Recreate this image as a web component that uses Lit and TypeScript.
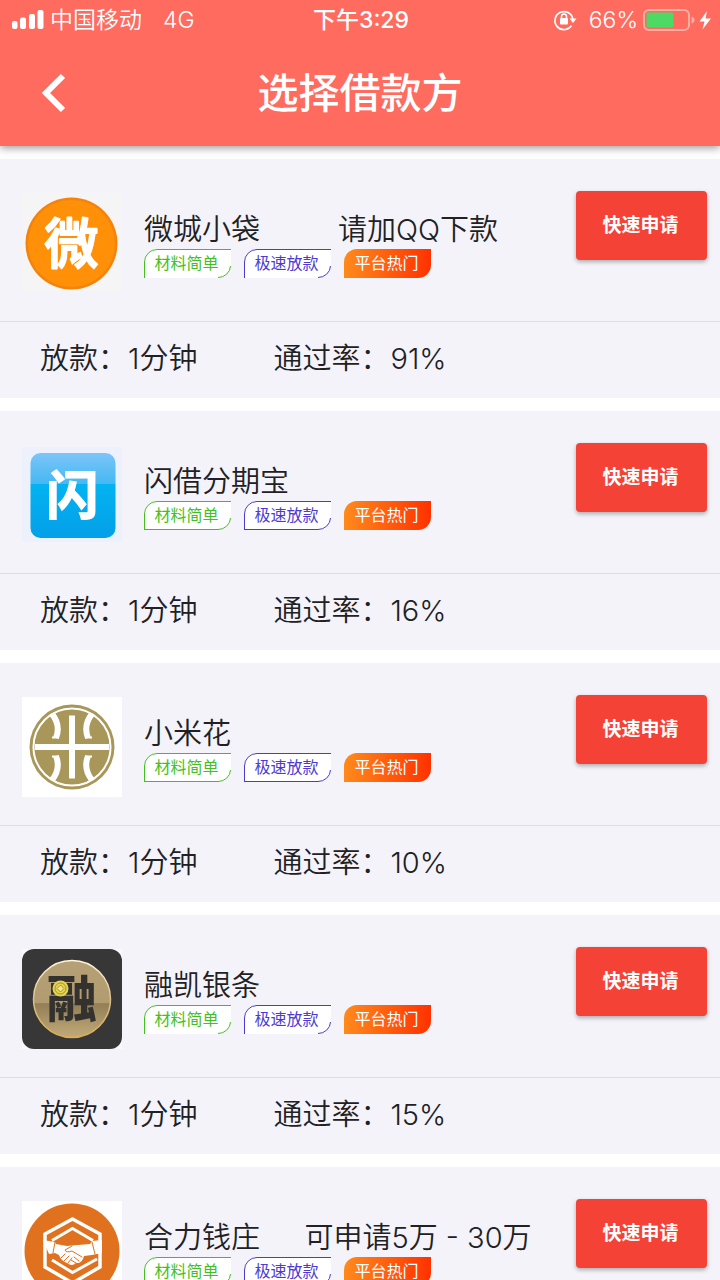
import { LitElement, html, svg, css, nothing } from "lit";
import { customElement, property } from "lit/decorators.js";

type Brand = "wei" | "shan" | "coin" | "rong" | "heli";

interface Lender {
  brand: Brand;
  name: string;
  note?: string;
  duration: string;
  rate: string;
  baseline: boolean;
}

const LENDERS: Lender[] = [
  { brand: "wei", name: "微城小袋", note: "请加QQ下款", duration: "1分钟", rate: "91%", baseline: false },
  { brand: "shan", name: "闪借分期宝", duration: "1分钟", rate: "16%", baseline: true },
  { brand: "coin", name: "小米花", duration: "1分钟", rate: "10%", baseline: true },
  { brand: "rong", name: "融凯银条", duration: "1分钟", rate: "15%", baseline: false },
  { brand: "heli", name: "合力钱庄", note: "可申请5万 - 30万", duration: "1分钟", rate: "20%", baseline: false },
];

const LOGOS: Record<Brand, unknown> = {
  wei: svg`
    <rect width="100" height="98" fill="#f6f5f5"/>
    <circle cx="49.5" cy="50.5" r="46" fill="#f5820c"/>
    <circle cx="49.5" cy="50.5" r="43.5" fill="#ff9008"/>
    <text class="glyph round" x="49.5" y="71" font-size="54" fill="#fff" stroke="#fff">微</text>`,
  shan: svg`
    <defs><linearGradient id="sky" x1="0" y1="0" x2="0" y2="1">
      <stop offset="0" stop-color="#7cc5f8"/><stop offset=".36" stop-color="#45b8f4"/>
      <stop offset=".37" stop-color="#03b3f1"/><stop offset="1" stop-color="#049fe8"/>
    </linearGradient></defs>
    <rect y="2" width="100" height="95" fill="#ecf1fb"/>
    <rect x="8.500" y="8" width="85" height="85" rx="10" fill="url(#sky)"/>
    <text class="glyph" x="50.500" y="70" font-size="53" fill="#fff">闪</text>`,
  coin: svg`
    <rect width="100" height="100" fill="#fff"/>
    <circle cx="50" cy="50" r="42.500" fill="#a89759"/>
    <circle cx="50" cy="50" r="38.500" fill="none" stroke="#fff" stroke-width="2"/>
    <g fill="none" stroke="#fff" stroke-width="6">
      <path d="M50 18.500V81.500M13 50H87"/>
      <path d="M30 17Q39 28 34 41M70 17Q61 28 66 41M30 83Q39 72 34 59M70 83Q61 72 66 59"/>
      <path stroke-width="2" d="M30 40.500H37M63 40.500H70M30 59.500H37M63 59.500H70"/>
    </g>`,
  rong: svg`
    <defs><linearGradient id="brass" x1="0" y1="0" x2="0" y2="1">
      <stop offset="0" stop-color="#b6a076"/><stop offset=".55" stop-color="#b19b70"/>
      <stop offset=".56" stop-color="#937e56"/><stop offset="1" stop-color="#c1aa79"/>
    </linearGradient>
    <linearGradient id="rim" x1="0" y1="0" x2="0" y2="1">
      <stop offset="0" stop-color="#fff6dc"/><stop offset=".5" stop-color="#d9c08c"/><stop offset="1" stop-color="#e0ae4e"/>
    </linearGradient></defs>
    <rect width="100" height="100" fill="#fafafa"/>
    <rect width="100" height="100" rx="12" fill="#373737"/>
    <circle cx="50" cy="50" r="38.500" fill="url(#brass)" stroke="url(#rim)" stroke-width="1.500"/>
    <text class="glyph" x="50" y="68" font-size="50" fill="#33322f">融</text>
    <circle cx="38.500" cy="39.500" r="8" fill="#e5d44c"/>
    <circle cx="38.500" cy="39.500" r="5.500" fill="none" stroke="#a08f3a"/>
    <path d="M38.500 36L42 39.500L38.500 43L35 39.500Z" fill="#f2e889" stroke="#8c7c32" stroke-width=".8"/>`,
  heli: svg`
    <rect width="100" height="100" fill="#fff"/>
    <circle cx="50" cy="50" r="47.500" fill="#e0711f"/>
    <g fill="none" stroke="#fff" stroke-width="3.500">
      <path d="M50.500 18L78 33V66L50.500 82L23 66V33Z"/>
      <path stroke-width="3" d="M30 39.500L50.500 27.500L71 39.500M30 59L50.500 71.500L75 58"/>
    </g>
    <path fill="#fff" d="M21 39L33 41L34 43L45 45L50 44.500L68 43L70 40L80 39V52L70 54L62 55Q60 63 54 62Q50 66 45 62Q39 60 37 54L33 52L27 53Z"/>
    <g fill="none" stroke="#e0711f" stroke-width="1" stroke-linecap="round">
      <path d="M33 41L31 52M70 41L73 53M50 45L43 49Q44 52 50 50L60 56M39 57L43 53M42 60L47 55M46 62L50 57M52 56L57 60M49 59L54 62"/>
    </g>`,
};

@customElement("loan-tag")
export class LoanTag extends LitElement {
  @property() tone = "green";
  @property({ type: Boolean }) baseline = false;

  static styles = css`
    :host { display: grid; width: 87px; height: 29px; }
    .edge, .label { grid-area: 1 / 1; }
    .edge { display: block; width: 87px; height: 29px; fill: none; }
    .green { color: #43bf20; }
    .violet { color: #4d3ad0; }
    .hot { color: #fff; }
    .label { padding-right: 2px; text-align: center; font-size: 16px; line-height: 28px; font-weight: 400; white-space: nowrap; }
    .paper { fill: #fff; }
    .line { stroke: currentColor; stroke-width: 1; }
  `;

  render() {
    const hot = this.tone === "hot";
    return html`
      <svg class="edge ${this.tone}" viewBox="0 0 87 29" aria-hidden="true">
        ${hot
          ? svg`<defs><linearGradient id="heat"><stop offset="0" stop-color="#ff8a1c"/><stop offset="1" stop-color="#ff3200"/></linearGradient></defs>
            <path fill="url(#heat)" d="M0 29V13A13 13 0 0 1 13 0H87V16A13 13 0 0 1 74 29Z"/>`
          : svg`<path class="paper" d="M0 29V13A13 13 0 0 1 13 0H87V16A13 13 0 0 1 74 29Z"/>
            <path class="line" d="M.5 29V13A12.500 12.500 0 0 1 13 .5H87M86.500 17A12.500 12 0 0 1 74 28.500"/>
            ${this.baseline ? svg`<path class="line" d="M0 28.500H75"/>` : nothing}`}
      </svg>
      <span class="label ${this.tone}"><slot></slot></span>
    `;
  }
}

@customElement("lender-card")
export class LenderCard extends LitElement {
  @property({ attribute: false }) lender!: Lender;

  static styles = css`
    :host { display: block; background: #f4f3f9; }
    .offer { display: flex; align-items: flex-start; height: 130px; padding: 32px 13px 0 22px; border-bottom: 1px solid #dddde2; }
    .logo { display: block; flex: none; width: 100px; height: 100px; margin: 2px 22px 0 0; }
    .glyph { font-family: "Noto Sans CJK SC", sans-serif; font-weight: 900; text-anchor: middle; }
    .round { font-weight: 500; stroke-width: 2; stroke-linejoin: round; stroke-linecap: round; }
    .info { flex: 1; min-width: 0; padding-top: 20px; }
    .heading { display: flex; line-height: 38px; white-space: nowrap; }
    .name { margin: 0; font-size: 29px; font-weight: inherit; }
    .note { flex: 1; text-align: center; }
    .tags { display: flex; gap: 13px; }
    .apply {
      flex: none; width: 131px; height: 69px; padding: 0 2px 0 0; border: 0; border-radius: 4px;
      background: #f44336; color: #fff; font: 700 19px/28px Inter, "Noto Sans CJK SC", sans-serif;
      box-shadow: 0 2px 4px rgba(0, 0, 0, 0.3); cursor: pointer;
    }
    .facts { display: flex; gap: 76px; margin: 0; padding: 17px 40px 19px; line-height: 40px; }
    .fact { display: flex; gap: 1px; }
    .term, .value { margin: 0; }
  `;

  render() {
    const l = this.lender;
    return html`
      <div class="offer">
        <svg class="logo" viewBox="0 0 100 100" aria-hidden="true">${LOGOS[l.brand]}</svg>
        <div class="info">
          <div class="heading">
            <h2 class="name">${l.name}</h2>
            ${l.note ? html`<span class="note">${l.note}</span>` : nothing}
          </div>
          <div class="tags">
            <loan-tag tone="green" ?baseline=${l.baseline}>材料简单</loan-tag>
            <loan-tag tone="violet" ?baseline=${l.baseline}>极速放款</loan-tag>
            <loan-tag tone="hot">平台热门</loan-tag>
          </div>
        </div>
        <button class="apply" type="button">快速申请</button>
      </div>
      <dl class="facts">
        <div class="fact"><dt class="term">放款：</dt><dd class="value">${l.duration}</dd></div>
        <div class="fact"><dt class="term">通过率：</dt><dd class="value">${l.rate}</dd></div>
      </dl>
    `;
  }
}

@customElement("app-root")
export class AppRoot extends LitElement {
  static styles = css`
    :host {
      display: flex; flex-direction: column; height: 100vh; background: #fff; color: #212123;
      font: 350 29px/40px Inter, "Noto Sans CJK SC", sans-serif;
    }
    .top { position: relative; z-index: 1; flex: none; background: #ff6b5f; color: #fff; box-shadow: 0 2px 8px rgba(0, 0, 0, 0.4); }
    .status { display: grid; grid-template-columns: 1fr auto 1fr; align-items: center; height: 40px; padding: 0 9px 0 11px; font-size: 23px; }
    .side { display: flex; align-items: center; white-space: nowrap; }
    .signal { width: 33px; height: 20px; margin-right: 6px; }
    .network { margin-left: 21px; }
    .right { justify-content: flex-end; }
    .time { font-weight: 500; }
    .lock { width: 24px; height: 22px; margin-right: 12px; }
    .battery { width: 68px; height: 24px; margin-left: 5px; }
    .bar { display: grid; grid-template-columns: 80px 1fr 80px; align-items: center; height: 106px; }
    .back { display: grid; justify-content: end; padding: 0 13px 0 0; border: 0; background: none; color: inherit; cursor: pointer; }
    .chevron { display: block; width: 26px; height: 40px; }
    .title { margin: 0; text-align: center; font-size: 41px; line-height: 60px; font-weight: 500; }
    .list { flex: 1; min-height: 0; overflow-y: auto; scrollbar-width: none; padding-top: 13px; }
    .cards { display: grid; gap: 13px; margin: 0; padding: 0; list-style: none; }
  `;

  render() {
    return html`
      <header class="top">
        <div class="status">
          <div class="side">
            <svg class="signal" viewBox="0 0 33 20" fill="#fff" aria-hidden="true">
              <rect x="1" y="11" width="5.500" height="8" rx="2"/><rect x="9" y="7.500" width="6" height="11.500" rx="2"/>
              <rect x="18" y="4" width="6" height="15" rx="2"/><rect x="26.500" y="0" width="6" height="19" rx="2"/>
            </svg>
            <span>中国移动</span><span class="network">4G</span>
          </div>
          <span class="time">下午3:29</span>
          <div class="side right">
            <svg class="lock" viewBox="0 0 24 22" fill="none" stroke="#fff" aria-hidden="true">
              <path stroke-width="1.700" d="M18.500 16.500A9 9 0 1 1 19.800 10"/>
              <path fill="#fff" stroke="none" d="M16.500 9.500H23.500L20 14Z"/>
              <rect x="7" y="9" width="8" height="6.500" rx="1" fill="#fff" stroke="none"/>
              <path stroke-width="1.500" d="M8.500 9.500V7.500A2.500 2.500 0 0 1 13.500 7.500V9.500"/>
            </svg>
            <span>66%</span>
            <svg class="battery" viewBox="0 0 68 24" aria-hidden="true">
              <rect x="1" y="2" width="45" height="20" rx="5" fill="none" stroke="#ffaea6" stroke-width="2"/>
              <rect x="3.500" y="4.500" width="27" height="15" rx="1.500" fill="#4cd964"/>
              <path fill="#ffaea6" d="M48.500 8.500Q51.500 9.500 51.500 12T48.500 15.500Z"/>
              <path fill="#fff" d="M64 3L56.500 13.500H61.500L59.500 21.500L68 10.500H62.500Z"/>
            </svg>
          </div>
        </div>
        <div class="bar">
          <button class="back" type="button" aria-label="返回">
            <svg class="chevron" viewBox="0 0 26 40" fill="none" stroke="#fff" stroke-width="6" aria-hidden="true">
              <path d="M22 3L5 20L22 37"/>
            </svg>
          </button>
          <h1 class="title">选择借款方</h1>
        </div>
      </header>
      <main class="list">
        <ul class="cards">
          ${LENDERS.map((l) => html`<li><lender-card .lender=${l}></lender-card></li>`)}
        </ul>
      </main>
    `;
  }
}
